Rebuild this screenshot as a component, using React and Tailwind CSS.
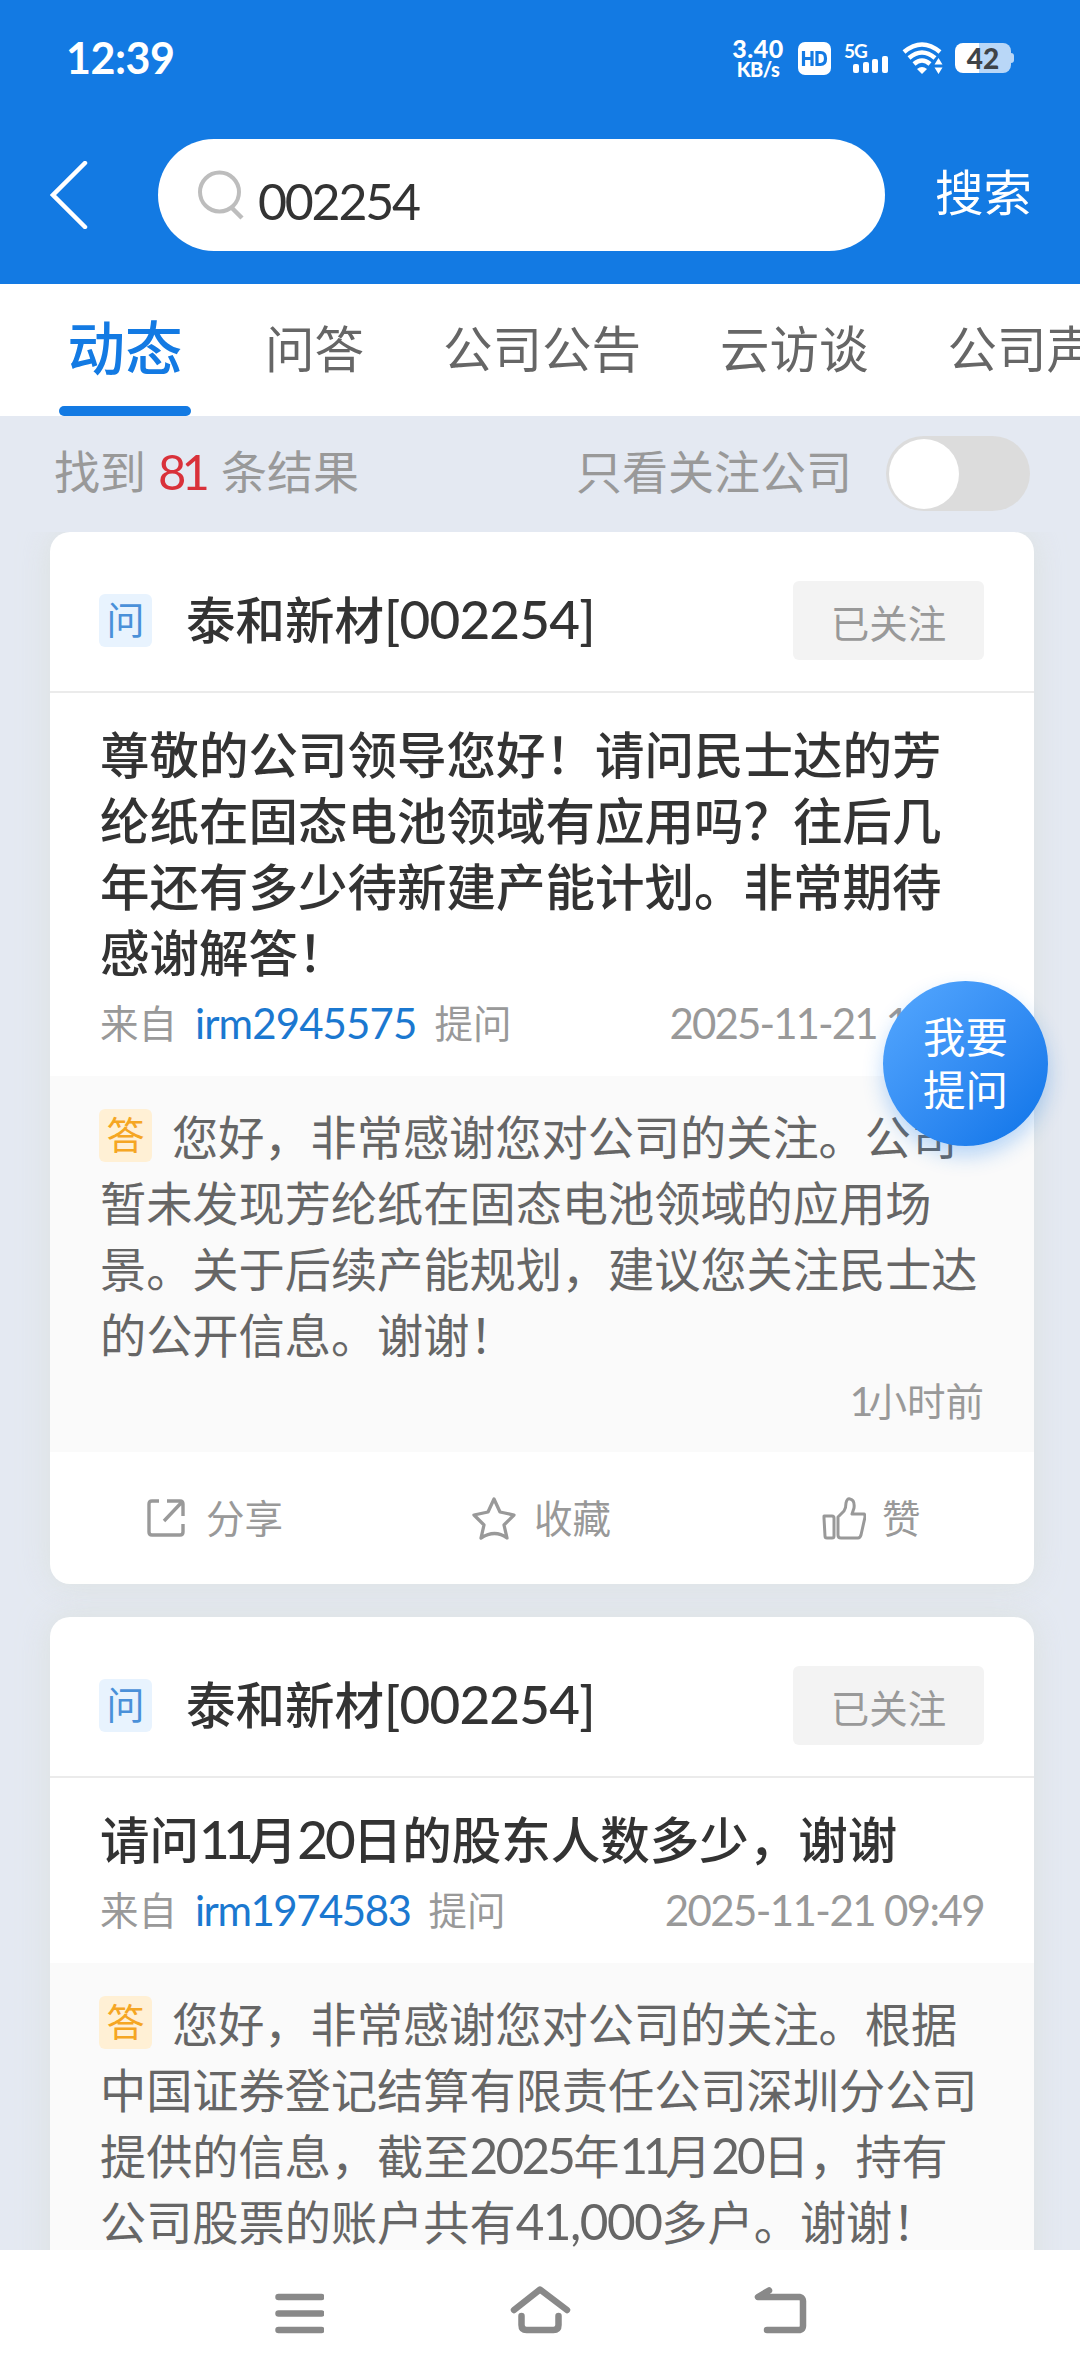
const TABS = [
  { label: '问答', className: 'ml-[83px]' },
  { label: '公司公告', className: 'ml-[79px]' },
  { label: '云访谈', className: 'ml-[79px]' },
  { label: '公司声明', className: 'ml-[79px]' },
];

const POSTS = [
  {
    id: 1,
    company: '泰和新材',
    code: '[002254]',
    question: ['尊敬的公司领导您好！请问民士达的芳', '纶纸在固态电池领域有应用吗？往后几', '年还有多少待新建产能计划。非常期待', '感谢解答！'],
    user: 'irm2945575',
    userClass: 'tracking-[-0.900px]',
    date: '2025-11-21 10:54',
    dateClass: 'tracking-[-1.900px]',
    answer: [
      '您好，非常感谢您对公司的关注。公司',
      '暂未发现芳纶纸在固态电池领域的应用场',
      '景。关于后续产能规划，建议您关注民士达',
      '的公开信息。谢谢！',
    ],
    time: '1小时前',
  },
  {
    id: 2,
    company: '泰和新材',
    code: '[002254]',
    question: ['请问11月20日的股东人数多少，谢谢'],
    user: 'irm1974583',
    userClass: 'tracking-[-1.500px]',
    date: '2025-11-21 09:49',
    dateClass: 'tracking-[-1.600px]',
    answer: [
      '您好，非常感谢您对公司的关注。根据',
      '中国证券登记结算有限责任公司深圳分公司',
      '提供的信息，截至2025年11月20日，持有',
      '公司股票的账户共有41,000多户。谢谢！',
    ],
    time: '3小时前',
  },
];

function trackingFor(digits) {
  if (/^1+$/.test(digits)) return 'tracking-[-0.12em]';
  if (digits.includes(',')) return 'tracking-[-0.03em]';
  return 'tracking-[-0.055em]';
}

/** Latin digits inside Chinese text are set in Lato, slightly larger than the
 * ideographs. Runs of ones are tightened. */
function Mixed({ text }) {
  return text.split(/([\d,]+)/).map((part, i) => {
    if (!/^\d/.test(part)) return part;
    return (
      <span key={i} className={`font-['Lato'] text-[1.07em] leading-none ${trackingFor(part)}`}>
        {part}
      </span>
    );
  });
}

function StatusBar() {
  return (
    <div className="flex h-[116px] items-center pl-[66px] text-white">
      <span className="-mt-[2px] w-[665px] font-['Lato'] text-[43px] leading-none font-bold tracking-[-0.500px]">12:39</span>
      <div className="flex w-[54px] flex-col items-center font-['Lato'] font-black">
        <span className="text-[25px] leading-[22px] tracking-[0.500px]">3.40</span>
        <span className="text-[20px] leading-[21px] tracking-[-0.500px]">KB/s</span>
      </div>
      <svg className="ml-[13px]" width="33" height="33" viewBox="0 0 33 33" fill="none">
        <rect width="33" height="33" rx="7" fill="#fff" />
        <path d="M5.500 9v15M14 9v15M5 16.500h9M19 10.500h3.500q5 0 5 6t-5 6H19z" stroke="#137ae3" strokeWidth="3.200" />
      </svg>
      <div className="relative ml-[13px] h-8 w-[45px]">
        <span className="absolute top-0 left-0 font-['Lato'] text-[19px] leading-[17px] font-bold tracking-[-1px]">5G</span>
        <svg className="absolute top-0 left-[9px]" width="36" height="32" viewBox="0 0 36 32" fill="#fff">
          <rect x="0" y="22" width="6" height="9" rx="2" />
          <rect x="10" y="20" width="6" height="11" rx="2" />
          <rect x="19" y="17" width="6" height="14" rx="2" />
          <rect x="29" y="14" width="6" height="17" rx="2" />
        </svg>
      </div>
      <svg className="ml-[13px]" width="42" height="34" viewBox="0 0 42 34" fill="none">
        <path d="M2 11q18-15 36 0M7 17q13-11 26 0M12 23q8-7 16 0" stroke="#fff" strokeWidth="4.500" />
        <path d="M15 28q5-4 10 0l-5 5z" fill="#fff" />
        <path d="M36.500 17l4 6.500h-8zM36.500 33l4-6.500h-8z" fill="#fff" />
      </svg>
      <div className="ml-[11px] flex items-center">
        <div className="flex h-[30px] w-[56px] items-center justify-center overflow-hidden rounded-lg bg-[linear-gradient(90deg,#fff_43%,#b9d7f7_43%)] font-['Lato'] text-[28px] leading-none font-black text-[#3f4347]">
          42
        </div>
        <div className="h-[10px] w-[3px] rounded-r-sm bg-[#b9d7f7]" />
      </div>
    </div>
  );
}

function SearchHeader() {
  return (
    <div className="flex h-[168px] items-start pt-[23px] pl-[50px]">
      <svg className="mt-[22px]" width="38" height="68" viewBox="0 0 38 68" fill="none" stroke="#fff" strokeWidth="4.500">
        <path d="M35 2L3 34l32 32" strokeLinecap="round" />
      </svg>
      <div className="ml-[70px] flex h-[112px] w-[727px] items-center rounded-full bg-white pl-[40px]">
        <svg width="46" height="50" viewBox="0 0 46 50" fill="none" stroke="#bdbdbd" strokeWidth="4">
          <circle cx="21.500" cy="22" r="19.500" />
          <path d="M34 38l10 10" strokeWidth="4.500" />
        </svg>
        <span className="mt-[11px] ml-[14px] font-['Lato'] text-[50px] leading-none tracking-[-2.200px] text-[#333]">002254</span>
      </div>
      <span className="mt-[18px] ml-[50px] text-[48.500px] leading-[66px] text-white">搜索</span>
    </div>
  );
}

function TabBar() {
  return (
    <div className="flex h-[132px] overflow-hidden bg-white pl-[59px] whitespace-nowrap">
      <div className="flex w-[132px] flex-col items-center">
        <span className="mt-[21px] h-[101px] text-[57.500px] leading-[80px] font-medium text-[#137ae3]">动态</span>
        <span className="h-[10px] w-[132px] rounded-[5px] bg-[#137ae3]" />
      </div>
      <div className="-ml-[9px] flex text-[49.500px] leading-[80px] text-[#666]">
        {TABS.map((tab) => (
          <span key={tab.label} className={`mt-[23px] ${tab.className}`}>{tab.label}</span>
        ))}
      </div>
    </div>
  );
}

function ResultBar() {
  return (
    <div className="flex h-[116px] items-start pr-[50px] pl-[54px] text-[46px] leading-[66px] whitespace-nowrap text-[#999]">
      <div className="mt-[20px] flex">
        <span>找到</span>
        <span className="mt-[2px] ml-[12px] w-[63px] font-['Lato'] text-[49px] tracking-[-5px] text-[#d9313a]">81</span>
        <span>条结果</span>
      </div>
      <span className="mt-[20px] ml-auto">只看关注公司</span>
      <div className="mt-[20px] ml-[34px] flex h-[75px] w-[144px] items-center rounded-full bg-[#dcdcdc] pl-[3px]">
        <span className="h-[70px] w-[70px] rounded-full bg-white" />
      </div>
    </div>
  );
}

function Badge({ children, className }) {
  return (
    <span className={`flex h-[53px] w-[53px] shrink-0 items-center justify-center rounded-md text-[38px] leading-[49px] ${className}`}>
      <span className="-mt-[6px]">{children}</span>
    </span>
  );
}

function ShareIcon() {
  return (
    <svg width="38" height="38" viewBox="0 0 38 38" fill="none" stroke="#999" strokeWidth="3.400">
      <path d="M12 2H5Q2 2 2 5v28q0 3 3 3h28q3 0 3-3v-8M20 2h13q3 0 3 3v12M35 3L17 22" />
    </svg>
  );
}

function StarIcon() {
  return (
    <svg width="44" height="43" viewBox="0 0 44 43" fill="none" stroke="#999" strokeWidth="3.300" strokeLinejoin="round">
      <path d="M22 2l6 13 14 3-10 10 3 13q-12-9-26 0l3-13L2 18l14-3z" />
    </svg>
  );
}

function ThumbIcon() {
  return (
    <svg width="44" height="43" viewBox="0 0 44 43" fill="none" stroke="#999" strokeWidth="3" strokeLinejoin="round">
      <path d="M2 19h8q2 0 2 2v18q0 2-2 2H5q-2 0-2-2L2 21z" />
      <path d="M16 20l6-6q2-3 2-8 1-5 4-4 5 1 4 9l-2 6h12q1 0 1 3l-4 18q-1 3-3 3H19q-3 0-3-3z" />
    </svg>
  );
}

function PostCard({ post }) {
  return (
    <div className="flex w-[984px] shrink-0 flex-col overflow-hidden rounded-[20px] bg-white shadow-[0_0_30px_rgba(215,220,210,0.6)]">
      <div className="flex h-[161px] items-center border-b-2 border-[#ebebeb] pt-[18px] pr-[50px] pl-[49px]">
        <Badge className="bg-[#e8f3fe] text-[#4a90d9]">问</Badge>
        <span className="-mt-[5px] ml-[34px] text-[49.500px] leading-[66px] font-medium text-[#333]">
          {post.company}
          <span className="font-['Lato'] text-[53px] leading-none tracking-[-0.800px]">{post.code}</span>
        </span>
        <span className="ml-auto flex h-[79px] w-[191px] items-center justify-center rounded-md bg-[#f3f3f3] text-[38.500px] leading-[60px] text-[#999]">
          已关注
        </span>
      </div>

      <div className="px-[50px] pt-[27px]">
        <div className="text-[49.500px] leading-[66px] font-medium whitespace-nowrap text-[#333]">
          {post.question.map((line) => (
            <p key={line} className="h-[66px]"><Mixed text={line} /></p>
          ))}
        </div>
        <div className="flex h-[92px] pt-[7px] text-[38.500px] leading-[60px] whitespace-nowrap text-[#999]">
          <span>来自</span>
          <span className={`mx-[18px] mt-[2px] font-['Lato'] text-[42px] text-[#1b78d0] ${post.userClass}`}>{post.user}</span>
          <span>提问</span>
          <span className={`mt-[2px] ml-auto font-['Lato'] text-[42px] ${post.dateClass}`}>{post.date}</span>
        </div>
      </div>

      <div className="h-[376px] bg-[#fafafa] px-[50px] pt-[26px]">
        <div className="text-[46.200px] leading-[66px] whitespace-nowrap text-[#666]">
          {post.answer.map((line, i) => (
            <p key={line} className="flex h-[66px] items-center">
              {i === 0 && <Badge className="mr-[20px] -ml-px bg-[#fff0d5] text-[#f5a623]">答</Badge>}
              <span><Mixed text={line} /></span>
            </p>
          ))}
        </div>
        <p className="mt-[3px] text-right text-[38.500px] leading-[60px] text-[#999]"><Mixed text={post.time} /></p>
      </div>

      <div className="flex h-[132px] items-center pl-[97px] text-[38.500px] leading-[60px] text-[#999]">
        <div className="flex w-[325px] items-center gap-[21px]">
          <ShareIcon />
          <span className="-mt-[4px]">分享</span>
        </div>
        <div className="flex w-[350px] items-center gap-[18px]">
          <StarIcon />
          <span className="-mt-[4px]">收藏</span>
        </div>
        <div className="flex items-center gap-[16px]">
          <ThumbIcon />
          <span className="-mt-[4px]">赞</span>
        </div>
      </div>
    </div>
  );
}

function NavBar() {
  return (
    <div className="flex h-[126px] shrink-0 items-start bg-white pt-[34px] pl-[274px]">
      <svg width="50" height="56" viewBox="0 0 50 56" fill="none" stroke="#898989" strokeWidth="6.500" strokeLinecap="round">
        <path d="M4.500 13h43M4.500 29.500h43M4.500 46h43" />
      </svg>
      <svg className="ml-[185px]" width="62" height="56" viewBox="0 0 62 56" fill="none" stroke="#898989" strokeWidth="6.500" strokeLinecap="round" strokeLinejoin="round">
        <path d="M5 26L31 5.500 58 26" />
        <path d="M12.500 32v9q0 5 5 5h27q5 0 5-5v-9" />
      </svg>
      <svg className="ml-[182px]" width="56" height="56" viewBox="0 0 56 56" fill="none" stroke="#898989" strokeWidth="6.500" strokeLinecap="round" strokeLinejoin="round">
        <path d="M16 6.500L5 13h42q3 1 3 4v25q0 3-3 4H14" />
      </svg>
    </div>
  );
}

export default function App() {
  return (
    <div
      lang="zh-CN"
      className="relative flex h-[2376px] w-[1080px] flex-col overflow-hidden bg-[#e4e9f2] font-['Noto_Sans_CJK_SC',sans-serif]"
    >
      <header className="h-[284px] shrink-0 bg-[#137ae3]">
        <StatusBar />
        <SearchHeader />
      </header>
      <TabBar />
      <ResultBar />
      <main className="flex min-h-0 flex-1 flex-col gap-[33px] overflow-hidden pl-[50px]">
        {POSTS.map((post) => (
          <PostCard key={post.id} post={post} />
        ))}
      </main>
      <NavBar />

      <button
        type="button"
        className="absolute top-[981px] left-[883px] flex h-[165px] w-[165px] flex-col items-center justify-center rounded-full bg-linear-to-br from-[#55a8ff] to-[#0673e8] pb-[6px] text-[42.500px] leading-[53px] text-white shadow-[0_10px_20px_rgba(30,130,240,0.3)]"
      >
        <span>我要</span>
        <span>提问</span>
      </button>
    </div>
  );
}
